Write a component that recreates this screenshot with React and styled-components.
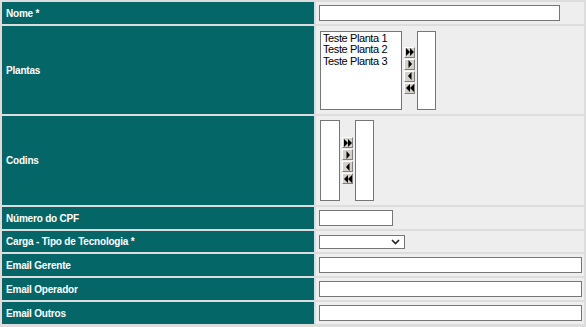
import React from "react";
import styled, { createGlobalStyle } from "styled-components";

const GlobalStyle = createGlobalStyle`
  html, body {
    margin: 0;
    padding: 0;
    background: #dddddd;
  }
`;

const Form = styled.div`
  display: grid;
  grid-template-columns: 312px 268px;
  gap: 2px;
  padding: 2px;
  width: 586px;
  box-sizing: border-box;
  background: #dddddd;
`;

const Label = styled.div`
  height: ${(p) => p.$h}px;
  background: #056667;
  color: #ffffff;
  font-family: "Liberation Sans", Arial, sans-serif;
  font-weight: bold;
  font-size: 10px;
  letter-spacing: -0.2px;
  display: flex;
  align-items: center;
  padding-left: 4px;
`;

const Value = styled.div`
  background: #eeeeee;
  display: flex;
  align-items: center;
  padding-left: 3px;
  gap: 2px;
`;

const TextInput = styled.input`
  box-sizing: border-box;
  width: ${(p) => p.$w}px;
  height: 16px;
  margin: 0;
  padding: 0 2px;
  border: 1px solid #767676;
  background: #ffffff;
  outline: none;
`;

const Select = styled.div`
  box-sizing: border-box;
  width: 86px;
  height: 14px;
  border: 1px solid #767676;
  background: #ffffff;
  display: flex;
  align-items: center;
  justify-content: flex-end;
  padding-right: 4px;
`;

const ListBox = styled.div`
  box-sizing: border-box;
  width: ${(p) => p.$w}px;
  height: ${(p) => p.$h}px;
  margin-left: ${(p) => p.$ml || 0}px;
  border: 1px solid #767676;
  background: #ffffff;
  padding: 1px 2px;
  font-family: "Liberation Sans", Arial, sans-serif;
  font-size: 11px;
  letter-spacing: -0.4px;
  line-height: 11.5px;
  color: #000000;
`;

const Mover = styled.div`
  display: flex;
  flex-direction: column;
  gap: 1px;
`;

const MoveButton = styled.div`
  box-sizing: border-box;
  width: 11px;
  height: 11px;
  background: #d4d0c8;
  border-top: 1px solid #ffffff;
  border-left: 1px solid #ffffff;
  border-right: 1px solid #808080;
  border-bottom: 1px solid #808080;
  display: flex;
  align-items: center;
  justify-content: center;
`;

const arrows = {
  allRight: "M0 0 L4 4 L0 8 Z M4 0 L8 4 L4 8 Z",
  right: "M2.5 0 L6 4 L2.5 8 Z",
  left: "M5.5 0 L2 4 L5.5 8 Z",
  allLeft: "M8 0 L4 4 L8 8 Z M4 0 L0 4 L4 8 Z",
};

function Arrow({ d }) {
  return (
    <svg width="8" height="8" viewBox="0 0 8 8">
      <path d={d} fill="#000000" />
    </svg>
  );
}

function Movers() {
  return (
    <Mover>
      <MoveButton><Arrow d={arrows.allRight} /></MoveButton>
      <MoveButton><Arrow d={arrows.right} /></MoveButton>
      <MoveButton><Arrow d={arrows.left} /></MoveButton>
      <MoveButton><Arrow d={arrows.allLeft} /></MoveButton>
    </Mover>
  );
}

function Chevron() {
  return (
    <svg width="9" height="6" viewBox="0 0 9 6">
      <path d="M1 1 L4.5 4.5 L8 1" fill="none" stroke="#222222" strokeWidth="1.6" />
    </svg>
  );
}

const plantas = ["Teste Planta 1", "Teste Planta 2", "Teste Planta 3"];

export default function App() {
  return (
    <>
      <GlobalStyle />
      <Form>
        <Label $h={22}>Nome *</Label>
        <Value>
          <TextInput $w={241} />
        </Value>

        <Label $h={88}>Plantas</Label>
        <Value>
          <ListBox $w={82} $h={79} $ml={1}>
            {plantas.map((p) => (
              <div key={p}>{p}</div>
            ))}
          </ListBox>
          <Movers />
          <ListBox $w={19} $h={79} />
        </Value>

        <Label $h={89}>Codins</Label>
        <Value>
          <ListBox $w={20} $h={81} $ml={1} />
          <Movers />
          <ListBox $w={19} $h={81} />
        </Value>

        <Label $h={22}>Número do CPF</Label>
        <Value>
          <TextInput $w={74} />
        </Value>

        <Label $h={21}>Carga - Tipo de Tecnologia *</Label>
        <Value>
          <Select>
            <Chevron />
          </Select>
        </Value>

        <Label $h={22}>Email Gerente</Label>
        <Value>
          <TextInput $w={263} />
        </Value>

        <Label $h={22}>Email Operador</Label>
        <Value>
          <TextInput $w={263} />
        </Value>

        <Label $h={22}>Email Outros</Label>
        <Value>
          <TextInput $w={263} />
        </Value>
      </Form>
    </>
  );
}
